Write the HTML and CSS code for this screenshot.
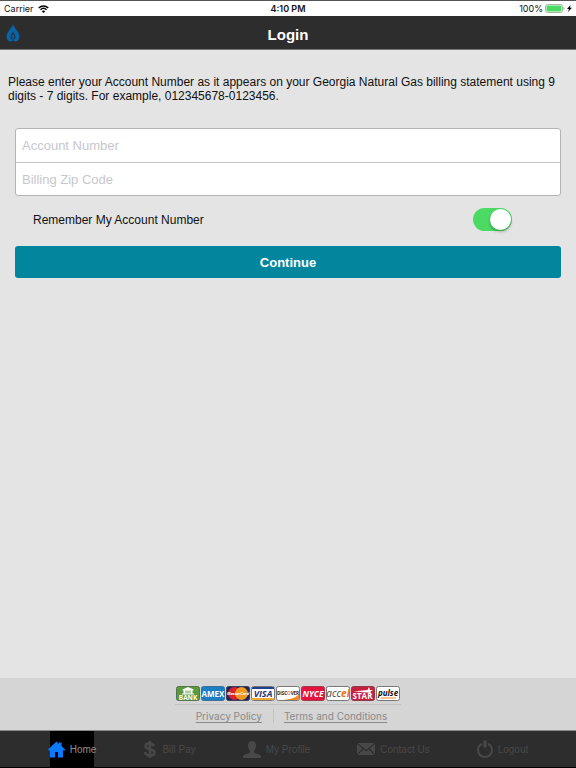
FILE: index.html
```
<!DOCTYPE html>
<html lang="en">
<head>
    <meta charset="UTF-8">
    <meta name="viewport" content="width=device-width, initial-scale=1.0">
    <title>Login</title>
    <link rel="stylesheet" href="styles.css">
</head>
<body>

    <!-- Status bar -->
    <div class="status-bar">
        <div class="status-left">
            <span>Carrier</span>
            <svg width="11" height="8" viewBox="0 0 22 16" fill="none" stroke="#000" stroke-width="3">
                <path d="M1.500 6C7 .5 15 .5 20.500 6"/>
                <path d="M5 9.500C8.500 6.200 13.500 6.200 17 9.500"/>
                <path d="M11 16L7.500 12.500C9.500 10.700 12.500 10.700 14.500 12.500Z" fill="#000" stroke="none"/>
            </svg>
        </div>
        <div class="status-time">4:10 PM</div>
        <div class="status-right">
            <span>100%</span>
            <svg width="20" height="9" viewBox="0 0 20 9">
                <rect x=".5" y=".5" width="17" height="8" rx="2" fill="#fff" stroke="#a5b5a8"/>
                <rect x="1.500" y="1.500" width="15" height="6" rx="1" fill="#4cd964"/>
                <path d="M18.500 3v3c1.300-.3 1.300-2.700 0-3z" fill="#999"/>
            </svg>
            <svg width="5" height="7" viewBox="0 0 5 7"><path d="M3.500 0L0 4h2L1 7l4-4.300H3z" fill="#000"/></svg>
        </div>
    </div>

    <header class="header">
        <svg class="logo" width="14" height="18" viewBox="0 0 28 36">
            <path d="M14 0C15 6 27 17 27 25c0 5-3 9-7 10-2 .6-4-.3-6-1.500-2 1.200-4 2.100-6 1.500-4-1-7-5-7-10C1 17 13 6 14 0z" fill="#0a64a8"/>
            <path d="M14 15c1 3 5 7 5 11 0 2-1 4-3 5h-4c-2-1-3-3-3-5 0-4 4-8 5-11z" fill="#2d2d2d"/>
            <path d="M14 19c0 2 3 4 3 7 0 2-1 3-3 4-2-1-3-2-3-4 0-3 3-5 3-7z" fill="#0a64a8"/>
            <path d="M14 24c1 2 1 3 0 4-1-1-1-2 0-4zM11 36l3-4 3 4z" fill="#2d2d2d"/>
        </svg>
        <h1>Login</h1>
    </header>

    <main class="content">
        <p class="intro">Please enter your Account Number as it appears on your Georgia Natural Gas billing statement using 9 digits - 7 digits. For example, 012345678-0123456.</p>

        <form class="login-form">
            <div class="fields">
                <input type="text" placeholder="Account Number" aria-label="Account Number">
                <input type="text" placeholder="Billing Zip Code" aria-label="Billing Zip Code">
            </div>
            <div class="remember">
                <label for="remember">Remember My Account Number</label>
                <input type="checkbox" class="switch" id="remember" checked>
            </div>
            <button type="button" class="continue">Continue</button>
        </form>
    </main>

    <footer class="footer">
        <!-- Accepted payment types -->
        <div class="cards">
            <svg class="card" viewBox="0 0 48 30">
                <rect x="1" y="1" width="46" height="28" rx="4" fill="#5b9a3c" stroke="#55764a" stroke-width="2"/>
                <path d="M24 2L13 7v2h22V7zM15 9h4v6h-4zM21 9h2v6h-2zM25 9h2v6h-2zM29 9h4v6h-4zM12 15h24v2H12z" fill="#fff"/>
                <text class="card-text" x="24" y="28" font-size="13">BANK</text>
            </svg>
            <svg class="card" viewBox="0 0 48 30">
                <rect x="1" y="1" width="46" height="28" rx="4" fill="#1c7fc4" stroke="#3c6f9a" stroke-width="2"/>
                <text class="card-text" x="24" y="21" font-size="16">AMEX</text>
            </svg>
            <svg class="card" viewBox="0 0 48 30">
                <rect x="1" y="1" width="46" height="28" rx="4" fill="#17265c" stroke="#3b3f63" stroke-width="2"/>
                <circle cx="17" cy="15" r="13" fill="#d9232e"/>
                <circle cx="31" cy="15" r="13" fill="#f29a1f"/>
                <text class="card-text slanted" x="24" y="18" font-size="8">MasterCard</text>
            </svg>
            <svg class="card" viewBox="0 0 48 30">
                <rect x="1" y="1" width="46" height="28" rx="4" fill="#fff" stroke="#777" stroke-width="2"/>
                <path d="M2 4q0-2 2-2h40q2 0 2 2v2H2z" fill="#1f3f94"/>
                <path d="M2 24h44v2q0 2-2 2H4q-2 0-2-2z" fill="#f0a830"/>
                <text class="card-text slanted" x="24" y="21" font-size="18" fill="#1f3278">VISA</text>
            </svg>
            <svg class="card" viewBox="0 0 48 30">
                <rect x="1" y="1" width="46" height="28" rx="4" fill="#fff" stroke="#777" stroke-width="2"/>
                <path d="M46 17v9q0 2-2 2H14q22-2 32-11z" fill="#ef8b2c"/>
                <text class="card-text" x="24" y="17" font-size="9" fill="#222">DISC<tspan fill="#ef7b1c">O</tspan>VER</text>
            </svg>
            <svg class="card" viewBox="0 0 48 30">
                <rect x="1" y="1" width="46" height="28" rx="4" fill="#e4123c" stroke="#a33a50" stroke-width="2"/>
                <text class="card-text slanted" x="24" y="21" font-size="17">NYCE</text>
            </svg>
            <svg class="card" viewBox="0 0 48 30">
                <rect x="1" y="1" width="46" height="28" rx="4" fill="#fff" stroke="#777" stroke-width="2"/>
                <text class="card-text light slanted" x="24" y="22" font-size="20" fill="#444">acc<tspan fill="#e8701a" font-weight="bold">el</tspan></text>
            </svg>
            <svg class="card" viewBox="0 0 48 30">
                <rect x="1" y="1" width="46" height="28" rx="4" fill="#c81f3f" stroke="#8f3a4c" stroke-width="2"/>
                <path d="M5 11l28-3 3-6 2 6h6l-5 3 1 6-5-4-4 0z" fill="#fff"/>
                <text class="card-text" x="23" y="26" font-size="16">STAR</text>
            </svg>
            <svg class="card" viewBox="0 0 48 30">
                <rect x="1" y="1" width="46" height="28" rx="4" fill="#fff" stroke="#777" stroke-width="2"/>
                <path d="M10 23h31l-2 2H9z" fill="#ef8b2c"/>
                <text class="card-text slanted" x="24" y="19" font-size="16" fill="#111">pulse</text>
            </svg>
        </div>
        <div class="links">
            <a href="#">Privacy Policy</a>
            <a href="#">Terms and Conditions</a>
        </div>
    </footer>

    <nav class="tab-bar">
        <a href="#" class="tab active">
            <svg width="17" height="17" viewBox="0 0 34 34" fill="currentColor"><path d="M17 1L0 17l2 2h2v14h10V22h6v11h10V19h4v-2L27 10V3h-5v3z"/></svg>
            <span>Home</span>
        </a>
        <a href="#" class="tab">
            <svg width="14" height="17" viewBox="0 0 28 34" fill="none" stroke="currentColor" stroke-width="5"><path d="M22 10C20 6 17 5 13 5 8 5 5 7 5 11c0 8 18 3 18 12 0 4-4 6-9 6-6 0-9-2-10-7M14 0v34"/></svg>
            <span>Bill Pay</span>
        </a>
        <a href="#" class="tab">
            <svg width="18" height="17" viewBox="0 0 36 34" fill="currentColor"><path d="M18 0c5 0 8 3 8 9 0 5-2 9-4 11v3c3 2 9 3 12 5 2 1 2 3 2 6H0c0-3 0-5 2-6 3-2 9-3 12-5v-3c-2-2-4-6-4-11 0-6 3-9 8-9z"/></svg>
            <span>My Profile</span>
        </a>
        <a href="#" class="tab">
            <svg width="18" height="12" viewBox="0 0 36 24" fill="currentColor"><path d="M1 0h34L18 14zM0 2l11 9L0 22zM36 2v20L25 11zM13 13l5 4 5-4 12 11H1z"/></svg>
            <span>Contact Us</span>
        </a>
        <a href="#" class="tab">
            <svg width="16" height="18" viewBox="0 0 32 36" fill="none" stroke="currentColor" stroke-width="4"><path d="M10 8C5 10 2 15 2 20c0 8 6 14 14 14s14-6 14-14c0-5-3-10-8-12"/><path d="M16 1v14" stroke-width="6"/></svg>
            <span>Logout</span>
        </a>
    </nav>

</body>
</html>
```
FILE: styles.css
```
* {
    box-sizing: border-box;
    margin: 0;
    padding: 0;
}

body {
    font-family: "Liberation Sans", Arial, sans-serif;
    background-color: #e4e4e4;
    color: #111;
    display: flex;
    flex-direction: column;
    min-height: 100vh;
}

svg {
    display: block;
    flex-shrink: 0;
}

.status-bar {
    display: grid;
    grid-template-columns: 1fr auto 1fr;
    align-items: center;
    height: 16px;
    padding: 0 4px;
    border-top: 1px solid #555;
    background-color: #fff;
    font-family: Inter, sans-serif;
    font-size: 9px;
    line-height: 14px;
}

.status-left,
.status-right {
    display: flex;
    align-items: center;
    gap: 4px;
}

.status-right {
    justify-content: flex-end;
    gap: 2px;
}

.status-time {
    font-weight: 600;
}

.header {
    position: relative;
    display: flex;
    align-items: center;
    justify-content: center;
    height: 34px;
    padding-top: 4px;
    background-color: #2d2d2d;
    border-bottom: 1px solid #777;
    color: #fff;
}

.header h1 {
    font-size: 15px;
    line-height: 18px;
}

.logo {
    position: absolute;
    left: 6px;
    top: 8px;
}

.content {
    flex: 1;
    padding: 25px 8px;
}

.intro {
    font-size: 12px;
    line-height: 14px;
}

.login-form {
    padding: 25px 7px 0;
}

.fields {
    border: 1px solid #b4b4b4;
    border-radius: 3px;
    background-color: #fff;
    overflow: hidden;
}

.fields input {
    display: block;
    width: 100%;
    height: 33px;
    padding: 0 6px;
    border: none;
    background: none;
    font-family: inherit;
    font-size: 13px;
}

.fields input + input {
    border-top: 1px solid #c4c4c4;
}

.fields input::placeholder {
    color: #c7c7cd;
}

.remember {
    display: flex;
    align-items: center;
    justify-content: space-between;
    padding: 12px 49px 15px 18px;
    font-size: 12px;
}

.switch {
    appearance: none;
    position: relative;
    width: 39px;
    height: 23px;
    border-radius: 12px;
    background-color: #ccc;
}

.switch:checked {
    background-color: #4cd964;
}

.switch::after {
    content: "";
    position: absolute;
    top: 1px;
    right: 1px;
    width: 21px;
    height: 21px;
    border-radius: 50%;
    background-color: #fff;
    box-shadow: 0 2px 3px rgba(0, 0, 0, 0.25);
}

.continue {
    display: block;
    width: 100%;
    height: 32px;
    border: none;
    border-radius: 3px;
    background-color: #02869e;
    color: #fff;
    font-family: inherit;
    font-size: 13px;
    font-weight: bold;
}

.footer {
    display: flex;
    flex-direction: column;
    align-items: center;
    padding: 8px 0 7px;
    background-color: #d5d5d5;
}

.cards {
    display: flex;
    gap: 1px;
    padding: 0 1px 3px;
    border-bottom: 1px solid #c2c2c2;
}

.card {
    width: 24px;
    height: 15px;
}

.card-text {
    font-family: "Open Sans", sans-serif;
    font-weight: bold;
    text-anchor: middle;
}

.card-text:not([fill]) {
    fill: #fff;
}

.slanted {
    font-style: italic;
}

.light {
    font-weight: normal;
}

.links {
    display: flex;
    padding: 4px 0 0 7px;
    font-family: Inter, sans-serif;
    font-size: 10px;
    line-height: 14px;
}

.links a {
    color: #8a8a8a;
    text-underline-offset: 2px;
}

.links a + a {
    margin-left: 11px;
    padding-left: 10px;
    border-left: 1px solid #c4c4c4;
}

.tab-bar {
    display: flex;
    justify-content: center;
    gap: 47px;
    height: 38px;
    background-color: #2d2d2d;
    border-top: 1px solid #888;
    border-bottom: 1px solid #000;
    font-size: 10px;
}

.tab {
    position: relative;
    display: flex;
    align-items: center;
    gap: 5px;
    color: #484848;
    text-decoration: none;
}

.tab.active {
    color: #8e8e8e;
}

.tab.active::before {
    content: "";
    position: absolute;
    inset: 0 2px;
    background-color: #000;
}

.tab.active svg,
.tab.active span {
    position: relative;
}

.tab.active svg {
    color: #0a7aff;
}
```
